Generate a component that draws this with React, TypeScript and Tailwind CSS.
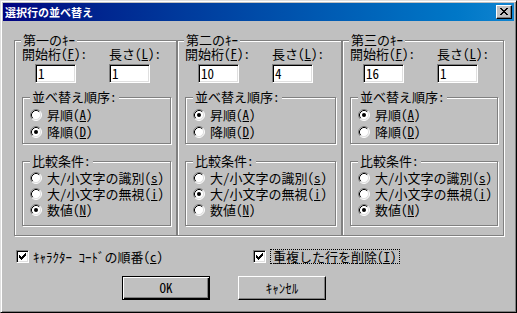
import React from "react";

function Radio({ checked }: { checked?: boolean }) {
  return (
    <svg width="12" height="12" viewBox="0 0 12 12" className="shrink-0">
      <circle cx="6" cy="6" r="5" fill="#fff" />
      <path d="M2.11 9.89 A5.5 5.5 0 0 1 9.89 2.11" stroke="#808080" fill="none" />
      <path d="M9.89 2.11 A5.5 5.5 0 0 1 2.11 9.89" stroke="#fff" fill="none" />
      <path d="M2.82 9.18 A4.5 4.5 0 0 1 9.18 2.82" stroke="#000" fill="none" />
      <path d="M9.18 2.82 A4.5 4.5 0 0 1 2.82 9.18" stroke="#dfdfdf" fill="none" />
      {checked && <circle cx="6" cy="6" r="2" fill="#000" />}
    </svg>
  );
}

function Check() {
  const cols: [number, number][] = [
    [2, 4],
    [3, 5],
    [4, 6],
    [5, 5],
    [6, 4],
    [7, 3],
    [8, 2],
  ];
  return (
    <div className="w-[13px] h-[13px] shrink-0 bg-white border border-t-[#808080] border-l-[#808080] border-b-white border-r-white shadow-[inset_1px_1px_0_#000,inset_-1px_-1px_0_#dfdfdf]">
      <svg width="11" height="11" viewBox="0 0 11 11" shapeRendering="crispEdges">
        {cols.map(([x, y]) => (
          <rect key={x} x={x} y={y} width="1" height="3" fill="#000" />
        ))}
      </svg>
    </div>
  );
}

function CloseX() {
  const px: [number, number, number][] = [
    [0, 0, 2], [6, 0, 2],
    [1, 1, 2], [5, 1, 2],
    [2, 2, 4],
    [3, 3, 2],
    [2, 4, 4],
    [1, 5, 2], [5, 5, 2],
    [0, 6, 2], [6, 6, 2],
  ];
  return (
    <svg width="14" height="12" viewBox="0 0 14 12" shapeRendering="crispEdges">
      {px.map(([x, y, w], i) => (
        <rect key={i} x={x + 3} y={y + 2} width={w} height="1" fill="#000" />
      ))}
    </svg>
  );
}

function Input({ value }: { value: string }) {
  return (
    <div className="w-[41px] h-[19px] bg-white border border-t-[#808080] border-l-[#808080] border-b-white border-r-white shadow-[inset_1px_1px_0_#000,inset_-1px_-1px_0_#dfdfdf] pl-[2px] flex items-center">
      {value}
    </div>
  );
}

function Row({ checked, children, h }: { checked?: boolean; children: React.ReactNode; h: string }) {
  return (
    <div className={`flex items-center gap-[5px] pl-[7px] ${h}`}>
      <Radio checked={checked} />
      <span className="whitespace-nowrap">{children}</span>
    </div>
  );
}

function Group({
  title,
  w,
  innerW,
  start,
  len,
  asc,
  cmp,
}: {
  title: string;
  w: string;
  innerW: string;
  start: string;
  len: string;
  asc: boolean;
  cmp: number;
}) {
  return (
    <div
      className={`relative h-[196px] shrink-0 border border-[#808080] shadow-[inset_1px_1px_0_#fff,1px_1px_0_#fff] pt-[6px] pl-[7px] ${w}`}
    >
      <span className="absolute -top-[8px] left-[6px] px-[2px] bg-[#c0c0c0] whitespace-nowrap">{title}</span>
      <div className="flex h-[14px] whitespace-nowrap">
        <span className="w-[87px] shrink-0">
          開始桁(<span className="underline underline-offset-1">F</span>):
        </span>
        <span>
          長さ(<span className="underline underline-offset-1">L</span>):
        </span>
      </div>
      <div className="flex mt-[3px]">
        <div className="w-[87px] shrink-0 pl-[13px]">
          <Input value={start} />
        </div>
        <Input value={len} />
      </div>
      <div
        className={`relative mt-[14px] pt-[8px] pb-[3px] border border-[#808080] shadow-[inset_1px_1px_0_#fff,1px_1px_0_#fff] ${innerW}`}
      >
        <span className="absolute -top-[8px] left-[7px] px-[2px] bg-[#c0c0c0] whitespace-nowrap">並べ替え順序:</span>
        <Row h="h-[17px]" checked={asc}>
          昇順(<span className="underline underline-offset-1">A</span>)
        </Row>
        <Row h="h-[17px]" checked={!asc}>
          降順(<span className="underline underline-offset-1">D</span>)
        </Row>
      </div>
      <div
        className={`relative mt-[17px] pt-[8px] pb-[7px] border border-[#808080] shadow-[inset_1px_1px_0_#fff,1px_1px_0_#fff] ${innerW}`}
      >
        <span className="absolute -top-[8px] left-[7px] px-[2px] bg-[#c0c0c0] whitespace-nowrap">比較条件:</span>
        <Row h="h-[16px]" checked={cmp === 0}>
          大/小文字の識別(<span className="underline underline-offset-1">s</span>)
        </Row>
        <Row h="h-[16px]" checked={cmp === 1}>
          大/小文字の無視(<span className="underline underline-offset-1">i</span>)
        </Row>
        <Row h="h-[16px]" checked={cmp === 2}>
          数値(<span className="underline underline-offset-1">N</span>)
        </Row>
      </div>
    </div>
  );
}

export default function App() {
  return (
    <div className="w-[517px] h-[313px] bg-[#c0c0c0] border border-t-[#dfdfdf] border-l-[#dfdfdf] border-r-black border-b-black shadow-[inset_1px_1px_0_#fff,inset_-1px_-1px_0_#808080] p-[2px] flex flex-col text-[13px] leading-[14px] text-black font-['Noto_Sans_Mono_CJK_JP','Noto_Sans_CJK_JP',sans-serif] overflow-hidden">
      <div className="h-[18px] shrink-0 bg-linear-to-r from-[#000080] to-[#1084d0] flex items-center justify-between pl-[2px] pr-[2px]">
        <span className="text-white font-bold text-[11px] leading-[14px] font-['Noto_Sans_CJK_JP',sans-serif]">
          選択行の並べ替え
        </span>
        <div className="w-[16px] h-[14px] bg-[#c0c0c0] border border-t-white border-l-white border-r-black border-b-black shadow-[inset_-1px_-1px_0_#808080]">
          <CloseX />
        </div>
      </div>

      <div className="flex mt-[19px] ml-[11px]">
        <Group title="第一のｷｰ" w="w-[163px]" innerW="w-[149px]" start="1" len="1" asc={false} cmp={2} />
        <Group title="第二のｷｰ" w="w-[165px]" innerW="w-[151px]" start="10" len="4" asc={true} cmp={1} />
        <Group title="第三のｷｰ" w="w-[162px]" innerW="w-[148px]" start="16" len="1" asc={true} cmp={2} />
      </div>

      <div className="flex items-center h-[15px] mt-[13px] ml-[13px]">
        <div className="w-[237px] shrink-0 flex items-center gap-[4px]">
          <Check />
          <span className="whitespace-nowrap">
            ｷｬﾗｸﾀｰ ｺｰﾄﾞの順番(<span className="underline underline-offset-1">c</span>)
          </span>
        </div>
        <div className="flex items-center gap-[4px]">
          <Check />
          <span className="whitespace-nowrap border border-dotted border-black px-[2px] h-[15px] flex items-center">
            重複した行を削除(<span className="underline underline-offset-1">I</span>)
          </span>
        </div>
      </div>

      <div className="flex mt-[12px] ml-[119px] gap-[28px]">
        <button className="w-[88px] h-[24px] bg-[#c0c0c0] border border-black shadow-[inset_1px_1px_0_#fff,inset_-1px_-1px_0_#000,inset_-2px_-2px_0_#808080] flex items-center justify-center">
          OK
        </button>
        <button className="w-[88px] h-[24px] bg-[#c0c0c0] border border-t-white border-l-white border-r-black border-b-black shadow-[inset_-1px_-1px_0_#808080] flex items-center justify-center">
          ｷｬﾝｾﾙ
        </button>
      </div>
    </div>
  );
}
